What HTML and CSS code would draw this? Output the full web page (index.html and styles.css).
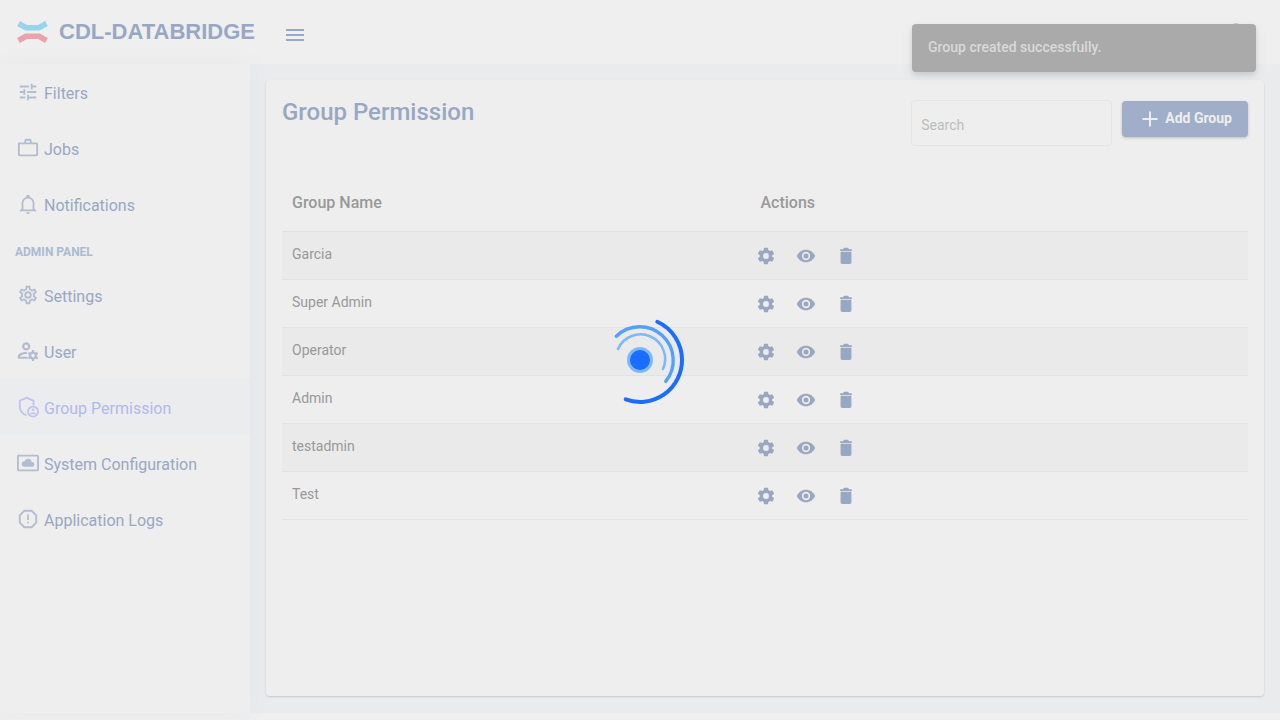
FILE: index.html
```
<!DOCTYPE html>
<html lang="en">
<head>
<meta charset="utf-8">
<title>CDL-DATABRIDGE - Group Permission</title>
<meta name="viewport" content="width=device-width, initial-scale=1">
<link rel="stylesheet" href="styles.css">
</head>
<body>
<svg class="defs" aria-hidden="true">
  <symbol id="cog" viewBox="0 0 24 24"><path d="M12,15.5A3.5,3.5 0 0,1 8.5,12A3.5,3.5 0 0,1 12,8.5A3.5,3.5 0 0,1 15.5,12A3.5,3.5 0 0,1 12,15.5M19.43,12.97C19.47,12.65 19.5,12.33 19.5,12C19.5,11.67 19.47,11.34 19.43,11L21.54,9.37C21.73,9.22 21.78,8.95 21.66,8.73L19.66,5.27C19.54,5.05 19.27,4.96 19.05,5.05L16.56,6.05C16.04,5.66 15.5,5.32 14.87,5.07L14.5,2.42C14.46,2.18 14.25,2 14,2H10C9.75,2 9.54,2.18 9.5,2.42L9.13,5.07C8.5,5.32 7.96,5.66 7.44,6.05L4.95,5.05C4.73,4.96 4.46,5.05 4.34,5.27L2.34,8.73C2.21,8.95 2.27,9.22 2.46,9.37L4.57,11C4.53,11.34 4.5,11.67 4.5,12C4.5,12.33 4.53,12.65 4.57,12.97L2.46,14.63C2.27,14.78 2.21,15.05 2.34,15.27L4.34,18.73C4.46,18.95 4.73,19.03 4.95,18.95L7.44,17.94C7.96,18.34 8.5,18.68 9.13,18.93L9.5,21.58C9.54,21.82 9.75,22 10,22H14C14.25,22 14.46,21.82 14.5,21.58L14.87,18.93C15.5,18.67 16.04,18.34 16.56,17.94L19.05,18.95C19.27,19.03 19.54,18.95 19.66,18.73L21.66,15.27C21.78,15.05 21.73,14.78 21.54,14.63L19.43,12.97Z"/></symbol>
  <symbol id="eye" viewBox="0 0 24 24"><path d="M12,9A3,3 0 0,0 9,12A3,3 0 0,0 12,15A3,3 0 0,0 15,12A3,3 0 0,0 12,9M12,17A5,5 0 0,1 7,12A5,5 0 0,1 12,7A5,5 0 0,1 17,12A5,5 0 0,1 12,17M12,4.5C7,4.5 2.73,7.61 1,12C2.73,16.39 7,19.5 12,19.5C17,19.5 21.27,16.39 23,12C21.27,7.61 17,4.5 12,4.5Z"/></symbol>
  <symbol id="trash" viewBox="0 0 24 24"><path d="M19,4H15.5L14.5,2H9.5L8.500,4H5V6H19M5.500,19A2,2 0 0,0 7.500,21.500H16.500A2,2 0 0,0 18.500,19V7H5.500V19Z"/></symbol>
</svg>

<header class="topbar">
  <svg class="logo" viewBox="0 0 33 24" aria-hidden="true">
    <path class="logo-top" d="M2.500 3.500L10 7.700H23L30.500 3.500"/>
    <path class="logo-bottom" d="M2.500 20.500L10 16.300H23L30.500 20.500"/>
  </svg>
  <span class="brand">CDL-DATABRIDGE</span>
  <button class="menu-button" type="button" aria-label="Toggle menu">
    <svg viewBox="0 0 24 24"><path d="M3,6H21V8H3V6M3,11H21V13H3V11M3,16H21V18H3V16Z"/></svg>
  </button>
  <button class="profile" type="button" aria-label="Profile"></button>
</header>

<div class="shell">
  <nav class="sidebar" aria-label="Main">
    <a class="nav-item" href="#"><svg viewBox="0 0 24 24"><path d="M3 17v2h6v-2H3M3 5v2h10V5H3m10 16v-2h8v-2h-8v-2h-2v6h2M7 9v2H3v2h4v2h2V9H7m14 4v-2H11v2h10m-6-4h2V7h4V5h-4V3h-2v6z"/></svg><span>Filters</span></a>
    <a class="nav-item" href="#"><svg viewBox="0 0 24 24"><path d="M20,6H16V4A2,2 0 0,0 14,2H10A2,2 0 0,0 8,4V6H4A2,2 0 0,0 1,8V19A2,2 0 0,0 3,21H21A2,2 0 0,0 23,19V8A2,2 0 0,0 21,6M10,4H14V6H10V4M21,19H3V8H21V19Z"/></svg><span>Jobs</span></a>
    <a class="nav-item" href="#"><svg viewBox="0 0 24 24"><path d="M10 21H14C14 22.100 13.100 23 12 23S10 22.100 10 21M21 19V20H3V19L5 17V11C5 7.900 7 5.200 10 4.300V4C10 2.900 10.900 2 12 2S14 2.900 14 4V4.300C17 5.200 19 7.900 19 11V17L21 19M17 11C17 8.200 14.800 6 12 6S7 8.200 7 11V18H17V11Z"/></svg><span>Notifications</span></a>
    <h2 class="nav-heading">ADMIN PANEL</h2>
    <a class="nav-item" href="#"><svg viewBox="0 0 24 24"><path d="M12,8A4,4 0 0,1 16,12A4,4 0 0,1 12,16A4,4 0 0,1 8,12A4,4 0 0,1 12,8M12,10A2,2 0 0,0 10,12A2,2 0 0,0 12,14A2,2 0 0,0 14,12A2,2 0 0,0 12,10M10,22C9.750,22 9.540,21.820 9.500,21.580L9.130,18.930C8.500,18.680 7.960,18.340 7.440,17.940L4.950,18.950C4.730,19.030 4.460,18.950 4.340,18.730L2.340,15.270C2.210,15.050 2.270,14.780 2.460,14.630L4.570,12.970L4.500,12L4.570,11L2.460,9.370C2.270,9.220 2.210,8.950 2.340,8.730L4.340,5.270C4.460,5.050 4.730,4.960 4.950,5.050L7.440,6.050C7.960,5.660 8.500,5.320 9.130,5.070L9.500,2.420C9.540,2.180 9.750,2 10,2H14C14.250,2 14.460,2.180 14.500,2.420L14.870,5.070C15.500,5.320 16.040,5.660 16.560,6.050L19.050,5.050C19.270,4.960 19.540,5.050 19.660,5.270L21.660,8.730C21.790,8.950 21.730,9.220 21.540,9.370L19.430,11L19.500,12L19.430,13L21.540,14.630C21.730,14.780 21.790,15.050 21.660,15.270L19.660,18.730C19.540,18.950 19.270,19.040 19.050,18.950L16.560,17.950C16.040,18.340 15.500,18.680 14.870,18.930L14.500,21.580C14.460,21.820 14.250,22 14,22H10M11.250,4L10.880,6.610C9.680,6.860 8.620,7.500 7.850,8.390L5.440,7.350L4.690,8.650L6.800,10.200C6.400,11.370 6.400,12.640 6.800,13.800L4.680,15.360L5.430,16.660L7.860,15.620C8.630,16.500 9.680,17.140 10.870,17.380L11.240,20H12.760L13.130,17.390C14.320,17.140 15.370,16.500 16.140,15.620L18.570,16.660L19.320,15.360L17.200,13.810C17.600,12.640 17.600,11.370 17.200,10.200L19.310,8.650L18.560,7.350L16.150,8.390C15.380,7.500 14.320,6.860 13.120,6.620L12.750,4H11.250Z"/></svg><span>Settings</span></a>
    <a class="nav-item" href="#"><svg viewBox="0 0 24 24"><path d="M10 2.500A4.500 4.500 0 0 0 5.500 7A4.500 4.500 0 0 0 10 11.500A4.500 4.500 0 0 0 14.500 7A4.500 4.500 0 0 0 10 2.500M10 5A2 2 0 0 1 12 7A2 2 0 0 1 10 9A2 2 0 0 1 8 7A2 2 0 0 1 10 5"/><path d="M11 13C7 12.800 1 14.300 1 17.500V20.500H11.500V18.300H3.500C3.500 16.500 7.500 15.200 11 15.400Z"/><path fill-rule="evenodd" d="M16.500 11H18.500L19 12.900L20.200 13.600L22 13L23.200 15L21.800 16.300V17.700L23.200 19L22 21L20.200 20.400L19 21.100L18.500 23H16.500L16 21.100L14.800 20.400L13 21L11.800 19L13.200 17.700V16.300L11.800 15L13 13L14.800 13.600L16 12.900ZM17.500 15A2 2 0 1 0 17.500 19A2 2 0 1 0 17.500 15"/></svg><span>User</span></a>
    <a class="nav-item nav-item-active" href="#" aria-current="page"><svg viewBox="0 0 24 24"><path fill="none" stroke="currentColor" stroke-width="2" d="M18 10V5L10.500 2L3 5V10.500C3 15.500 5.800 19.400 10.500 21"/><circle cx="17.500" cy="17" r="5.500" fill="none" stroke="currentColor" stroke-width="2"/><circle cx="17.500" cy="15" r="1.500"/><path d="M14.500 19.200C14.500 17.500 20.500 17.500 20.500 19.200V20H14.500Z"/></svg><span>Group Permission</span></a>
    <a class="nav-item" href="#"><svg viewBox="0 0 24 24"><path fill-rule="evenodd" d="M21 3H3A2 2 0 0 0 0 5V19A2 2 0 0 0 2 21H22A2 2 0 0 0 24 19V5A2 2 0 0 0 22 3M22 19H2V5H22V19M8 16H16.500A2.500 2.500 0 0 0 16.500 11H16A4 4 0 0 0 8.300 10A3 3 0 0 0 8 16"/></svg><span>System Configuration</span></a>
    <a class="nav-item" href="#"><svg viewBox="0 0 24 24"><path fill="none" stroke="currentColor" stroke-width="2" d="M8 3H16L21 8V16L16 21H8L3 16V8Z"/><path d="M11 7H13V13H11ZM11 15H13V17H11Z"/></svg><span>Application Logs</span></a>
  </nav>

  <main class="content">
    <section class="card">
      <div class="card-head">
        <h1 class="title">Group Permission</h1>
        <input class="search" type="search" placeholder="Search" aria-label="Search">
        <button class="add-button" type="button"><svg viewBox="0 0 24 24" aria-hidden="true"><path d="M21 13.200H13.200V21H10.800V13.200H3V10.800H10.800V3H13.200V10.800H21Z"/></svg><span>Add Group</span></button>
      </div>
      <table class="groups">
        <colgroup><col class="col-name"><col></colgroup>
        <thead><tr><th scope="col">Group Name</th><th scope="col">Actions</th></tr></thead>
        <tbody id="group-rows"></tbody>
      </table>
    </section>
  </main>
</div>

<div class="toast" role="status">Group created successfully.</div>

<svg class="loader" viewBox="-45 -45 90 90" role="img" aria-label="Loading">
  <circle class="loader-halo" r="13"/>
  <circle class="loader-dot" r="10"/>
  <path class="loader-inner" d="M-22 -11A24.600 24.600 0 0 1 23 9"/>
  <path class="loader-middle" d="M-23.700 -23.700A33.500 33.500 0 0 1 25.700 21.400"/>
  <path class="loader-outer" d="M17.300 -38.200A42 42 0 0 1 42 0A42 42 0 0 1 -14.300 39.400"/>
</svg>
<script src="groups.js"></script>
</body>
</html>
```
FILE: styles.css
```
* { box-sizing: border-box; }

body {
  margin: 0;
  min-height: 100vh;
  background: #efefef;
  color: #999;
  font: 14px/20px Roboto, "Liberation Sans", sans-serif;
}

button { border: 0; font: inherit; cursor: pointer; }
svg { fill: currentColor; flex: none; }
.defs { position: absolute; width: 0; height: 0; }

.topbar {
  display: flex;
  align-items: center;
  height: 64px;
  padding: 0 24px 0 16px;
  color: #98a8c2;
}
.logo { width: 33px; height: 24px; margin-right: 10px; }
.logo path { fill: none; stroke-width: 5.5; }
.logo .logo-top { stroke: #98d5ea; }
.logo .logo-bottom { stroke: #e9a1ac; }
.brand { font: bold 22px/32px "Liberation Sans", Arial, sans-serif; }
.menu-button {
  display: flex;
  margin: 6px 0 0 28px;
  padding: 0;
  background: none;
  color: #98a8c2;
}
.menu-button svg { width: 24px; height: 24px; }
.profile {
  width: 40px;
  height: 20px;
  margin-left: auto;
  padding: 0;
  background: radial-gradient(circle 9px at 50% 50%, #98a8c8 8px, transparent 9px);
}

.shell {
  display: flex;
  min-height: calc(100vh - 71px);
  background: #eaebed;
}
.sidebar {
  flex: none;
  width: 250px;
  background: #eee;
  box-shadow: 0 0 20px rgba(130, 140, 190, 0.06);
}
.nav-item {
  display: flex;
  align-items: center;
  gap: 5px;
  height: 56px;
  padding: 4px 16px 0 17px;
  color: #98a8c2;
  font-size: 16px;
  text-decoration: none;
}
.nav-item svg {
  width: 22px;
  height: 22px;
  margin-bottom: 4px;
  color: #b3bdd0;
}
.nav-item-active { background: #ebecee; color: #b3b8eb; }
.nav-item-active svg { color: #c0c4ee; }
.nav-heading {
  margin: 0;
  padding: 10px 15px 5px;
  color: #aabbd2;
  font-size: 12px;
  font-weight: 700;
  line-height: 20px;
}

.content { display: flex; flex: 1; min-width: 0; padding: 16px 16px 17px; }
.card {
  flex: 1;
  min-width: 0;
  padding: 16px;
  border-radius: 4px;
  background: #eee;
  box-shadow: 0 1px 2px rgba(0, 0, 0, 0.15);
}
.card-head { display: flex; align-items: flex-start; gap: 10px; height: 76px; padding-top: 4px; }
.title {
  flex: 1;
  margin: 0;
  color: #98a8c2;
  font-size: 24px;
  font-weight: 500;
  line-height: 24px;
}
.search {
  width: 201px;
  height: 46px;
  padding: 4px 9px 0;
  border: 1px solid #e5e5e5;
  border-radius: 4px;
  background: transparent;
  color: #999;
  font: inherit;
  appearance: none;
}
.search::placeholder { color: #bcbcbc; opacity: 1; }
.add-button {
  display: flex;
  align-items: center;
  gap: 5px;
  height: 36px;
  margin-top: 1px;
  padding: 0 16px 2px 18px;
  border-radius: 4px;
  background: #a1aec9;
  box-shadow: 0 1px 3px rgba(0, 0, 0, 0.2);
  color: #eee;
  font-weight: 700;
}
.add-button svg { width: 20px; height: 20px; margin-top: 2px; }

.groups {
  width: 100%;
  border-collapse: collapse;
  table-layout: fixed;
}
.col-name { width: 48.5%; }
.groups th {
  height: 59px;
  padding: 3px 10px 0;
  border-bottom: 1px solid #e0e0e0;
  font-size: 16px;
  font-weight: 500;
  text-align: left;
}
.groups td {
  height: 48px;
  padding: 0 10px 2px;
  border-bottom: 1px solid #e1e2e2;
}
.groups tbody tr:nth-child(odd) { background: #eaeaea; }
.groups .actions { padding: 2px 5px 0; }
.action-list { display: flex; gap: 20px; }
.action { display: flex; padding: 0; background: none; color: #98a8c2; }
.action svg { width: 20px; height: 20px; }

.toast {
  position: absolute;
  top: 24px;
  right: 24px;
  width: 344px;
  padding: 13px 16px 15px;
  border-radius: 4px;
  background: #aaa;
  box-shadow: 0 3px 5px rgba(0, 0, 0, 0.1), 0 4px 14px rgba(0, 0, 0, 0.06);
  color: #d9d9d9;
  font-weight: 500;
}

.loader {
  position: fixed;
  inset: 0;
  width: 90px;
  height: 90px;
  margin: auto;
}
.loader path { fill: none; stroke-linecap: round; }
.loader-dot { fill: #1a6dff; }
.loader-halo { fill: #7db8fc; }
.loader .loader-inner { stroke: #7db8fc; stroke-width: 2.5; }
.loader .loader-middle { stroke: #52a0ff; stroke-width: 3.3; }
.loader .loader-outer { stroke: #1a6dff; stroke-width: 4; }
```
FILE: groups.js
```
const groups = ["Garcia", "Super Admin", "Operator", "Admin", "testadmin", "Test"];
const actions = [["Settings", "cog"], ["View", "eye"], ["Delete", "trash"]];

document.getElementById("group-rows").innerHTML = groups.map((name) => `
  <tr>
    <td>${name}</td>
    <td class="actions"><div class="action-list">${actions.map(([label, icon]) => `
      <button class="action" type="button" aria-label="${label} ${name}"><svg><use href="#${icon}"/></svg></button>`).join("")}
    </div></td>
  </tr>`).join("");
```
